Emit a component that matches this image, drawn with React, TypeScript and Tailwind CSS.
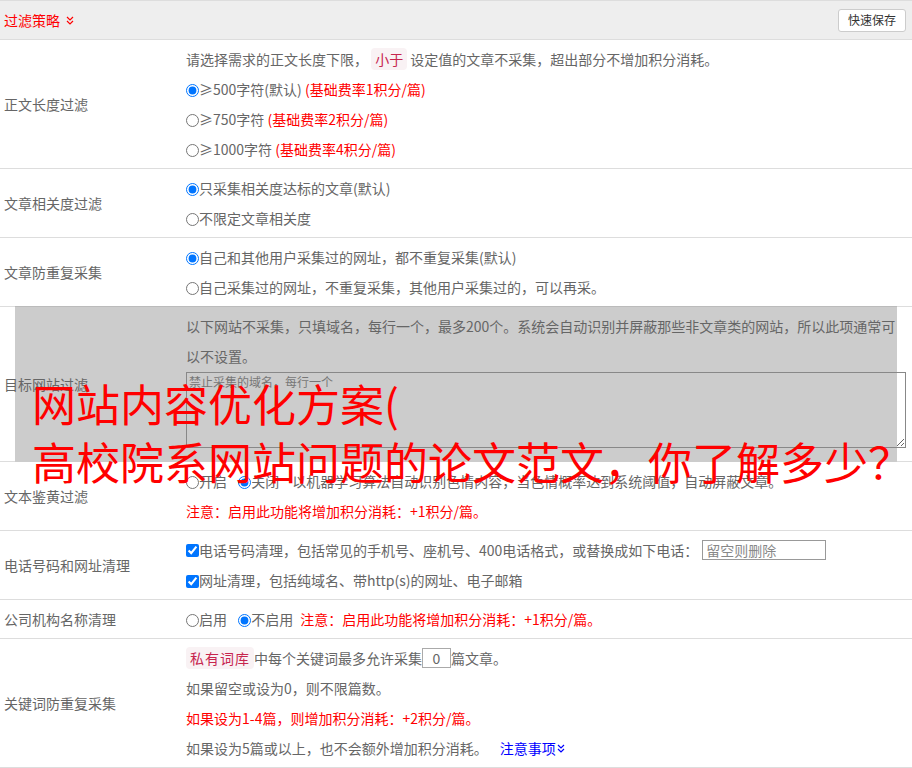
import React from 'react'

const font = { fontFamily: '"Noto Sans CJK SC", "Noto Sans", sans-serif' }

function DoubleDown({ className }: { className?: string }) {
  return (
    <svg className={className} width="8" height="9" viewBox="0 0 8 9" fill="none" stroke="currentColor" strokeWidth="1.2">
      <polyline points="1,1 4,4 7,1" />
      <polyline points="1,5 4,8 7,5" />
    </svg>
  )
}

function Badge({ children, wide }: { children: React.ReactNode; wide?: boolean }) {
  return (
    <span
      className={`inline-block rounded-[4px] bg-[#f9f2f4] leading-[22px] text-[#c7254e] ${wide ? 'px-[4px] tracking-[1px]' : 'px-1'}`}
    >
      {children}
    </span>
  )
}

function Row({ label, children }: { label: string; children: React.ReactNode }) {
  return (
    <div className="flex border-b border-[#ddd]">
      <div className="relative z-10 flex w-[180px] shrink-0 items-center pl-1 text-[#666]">{label}</div>
      <div className="relative z-10 flex-1 py-1 pl-[6px] pr-[6px] leading-[30px]">{children}</div>
    </div>
  )
}

function Radio({ checked, name }: { checked?: boolean; name: string }) {
  return <input type="radio" name={name} defaultChecked={checked} className="m-0 h-[13px] w-[13px] align-[-2px]" />
}

function Check() {
  return <input type="checkbox" defaultChecked className="m-0 h-[13px] w-[13px] align-[-2px]" />
}

export default function App() {
  return (
    <div className="relative w-[912px] overflow-hidden bg-white text-[14px] text-[#666]" style={font}>
      {/* header */}
      <div className="flex h-[40px] items-center justify-between border-y border-[#ddd] bg-[#eee] pl-1 pr-[6px]">
        <div className="flex items-center gap-[6px] text-[#f00]">
          <span>过滤策略</span>
          <DoubleDown />
        </div>
        <button className="h-[23px] rounded-[3px] border border-[#ccc] bg-white px-[9px] text-[12px] text-[#333]">快速保存</button>
      </div>

      <Row label="正文长度过滤">
        <div>
          请选择需求的正文长度下限， <Badge>小于</Badge> 设定值的文章不采集，超出部分不增加积分消耗。
        </div>
        <div>
          <Radio name="len" checked />≥500字符(默认) <span className="text-[#f00]">(基础费率1积分/篇)</span>
        </div>
        <div>
          <Radio name="len" />≥750字符 <span className="text-[#f00]">(基础费率2积分/篇)</span>
        </div>
        <div>
          <Radio name="len" />≥1000字符 <span className="text-[#f00]">(基础费率4积分/篇)</span>
        </div>
      </Row>

      <Row label="文章相关度过滤">
        <div>
          <Radio name="rel" checked />只采集相关度达标的文章(默认)
        </div>
        <div>
          <Radio name="rel" />不限定文章相关度
        </div>
      </Row>

      <Row label="文章防重复采集">
        <div>
          <Radio name="dup" checked />自己和其他用户采集过的网址，都不重复采集(默认)
        </div>
        <div>
          <Radio name="dup" />自己采集过的网址，不重复采集，其他用户采集过的，可以再采。
        </div>
      </Row>

      <div className="relative">
        <div className="absolute bottom-0 left-[15px] right-[15px] top-[-1px] border-t border-[#bbb] bg-[#ccc]" />
        <Row label="目标网站过滤">
          <div className="pr-[2px]">
            以下网站不采集，只填域名，每行一个，最多200个。系统会自动识别并屏蔽那些非文章类的网站，所以此项通常可以不设置。
          </div>
          <textarea
            placeholder="禁止采集的域名，每行一个"
            className="mb-[9px] mt-[1px] block h-[76px] w-full border border-[#888] bg-transparent px-[2px] text-[12px] leading-[18px] placeholder:text-[#777]"
          />
        </Row>
      </div>

      <Row label="文本鉴黄过滤">
        <div>
          <Radio name="porn" />开启 <span className="ml-2" />
          <Radio name="porn" checked />关闭 <span className="ml-[10px]">以机器学习算法自动识别色情内容，当色情概率达到系统阈值，自动屏蔽文章。</span>
        </div>
        <div className="text-[#f00]">注意：启用此功能将增加积分消耗：+1积分/篇。</div>
      </Row>

      <Row label="电话号码和网址清理">
        <div className="flex items-center">
          <Check />
          <span>电话号码清理，包括常见的手机号、座机号、400电话格式，或替换成如下电话：</span>
          <input
            placeholder="留空则删除"
            className="ml-[4px] h-[20px] w-[124px] border border-[#999] px-[3px] text-[14px] leading-[18px] placeholder:text-[#888]"
          />
        </div>
        <div>
          <Check />网址清理，包括纯域名、带http(s)的网址、电子邮箱
        </div>
      </Row>

      <Row label="公司机构名称清理">
        <div>
          <Radio name="org" />启用 <span className="ml-2" />
          <Radio name="org" checked />不启用 <span className="ml-[4px] text-[#f00]">注意：启用此功能将增加积分消耗：+1积分/篇。</span>
        </div>
      </Row>

      <Row label="关键词防重复采集">
        <div className="flex items-center">
          <Badge wide>私有词库</Badge>
          <span>中每个关键词最多允许采集</span>
          <input defaultValue="0" className="h-[20px] w-[29px] border border-[#aaa] text-center text-[14px] leading-[18px] text-[#666]" />
          <span>篇文章。</span>
        </div>
        <div>如果留空或设为0，则不限篇数。</div>
        <div className="text-[#f00]">如果设为1-4篇，则增加积分消耗：+2积分/篇。</div>
        <div>
          如果设为5篇或以上，也不会额外增加积分消耗。
          <span className="ml-3 inline-flex items-center text-[#00f]">
            注意事项
            <DoubleDown className="ml-[1px]" />
          </span>
        </div>
      </Row>

      {/* watermark title */}
      <div className="pointer-events-none absolute left-[32px] top-[374px] z-20 text-[44px] leading-[58px] text-[#f00]">
        <div>网站内容优化方案(</div>
        <div>高校院系网站问题的论文范文，你了解多少？</div>
      </div>
    </div>
  )
}
